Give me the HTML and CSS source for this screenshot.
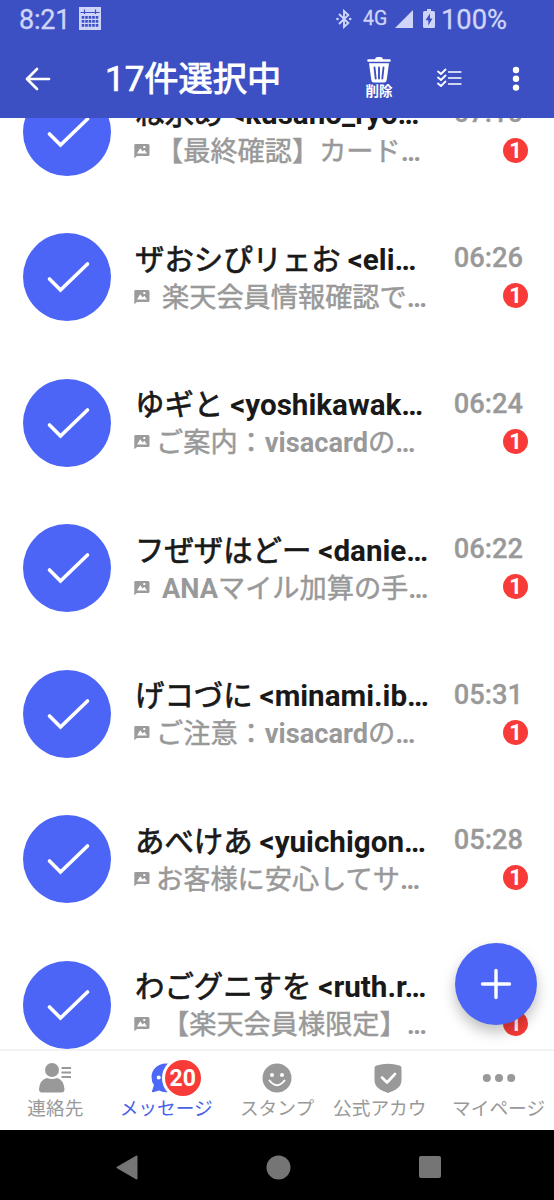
FILE: index.html
```html
<!DOCTYPE html>
<html lang="ja">
<head>
<meta charset="utf-8">
<title>メッセージ</title>
<link rel="stylesheet" href="styles.css">
</head>
<body>
<svg class="defs" width="0" height="0">
  <symbol id="check" viewBox="0 0 88 88"><path d="M26.500 46 37.500 57 64.500 31" fill="none" stroke="#fff" stroke-width="3.600" stroke-linecap="round" stroke-linejoin="miter"/></symbol>
  <symbol id="photo" viewBox="0 0 16 16"><path fill="#9b9b9b" fill-rule="evenodd" d="M1.500 1H14Q15.500 1 15.500 2.500V11.500Q15.500 13 14 13H3L.3 15.300V2.200Q.3 1 1.500 1ZM3 10.500H13L10.400 6.800 8.600 8.600 6.200 5.300ZM9.300 3V5H11.300V3Z"/></symbol>
</svg>
<div class="screen">
  <div class="status">
    <span class="clock">8:21</span>
    <svg class="calendar" width="22" height="23" viewBox="0 0 22 23"><path fill="#ced5f8" d="M0 0H22V23H0Z"/><path d="M1.500 5.500H20.500M5.500 2.500V7M16.500 2.500V7" stroke="#3d50c3" stroke-width="1.200"/><path d="M2.700 10.300H19.500M2.700 14.300H19.500M2.700 18.300H19.500" stroke="#3d50c3" stroke-width="2.800" stroke-dasharray="2.600 .9"/></svg>
    <svg class="bluetooth" width="16" height="20" viewBox="0 0 16 20"><path d="M3 5 12.300 14 8 18V2L12.300 6 3 15" fill="none" stroke="#ced5f8" stroke-width="1.900"/><circle cx="1.500" cy="10" r="1.300" fill="#ced5f8"/><circle cx="14.200" cy="10" r="1.300" fill="#ced5f8"/></svg>
    <span class="network">4G</span>
    <svg class="signal" width="18" height="18" viewBox="0 0 18 18"><path fill="#ced5f8" d="M18 0V18H0Z"/></svg>
    <svg class="battery" width="12" height="19" viewBox="0 0 12 19"><path fill="#ced5f8" d="M4 0H8V2H10.500Q12 2 12 3.500V17.500Q12 19 10.500 19H1.500Q0 19 0 17.500V3.500Q0 2 1.500 2H4Z"/><path fill="#3d50c3" d="M7 4.500 2.500 11.300H5.300V16.500L9.500 9.500H7Z"/></svg>
    <span class="percent">100%</span>
  </div>
  <header class="toolbar">
    <svg class="back" width="26" height="24" viewBox="0 0 26 24"><path d="M24 12H2M12 2 2 12 12 22" fill="none" stroke="#fff" stroke-width="2.700" stroke-linecap="round" stroke-linejoin="round"/></svg>
    <h1 class="title"><span class="count">17</span>件選択中</h1>
    <div class="delete">
      <svg width="24" height="26" viewBox="0 0 24 26"><path fill="#fff" d="M1.500 2.200H8Q8.500 0 10.500 0H13.500Q15.500 0 16 2.200H22.500Q23.800 2.200 23.800 3.500T22.500 4.800H1.500Q.2 4.800.2 3.500T1.500 2.200ZM2 6.300H22L19.700 23Q19.400 25.500 17 25.500H7Q4.600 25.500 4.300 23Z"/><path d="M7.500 10.500 8.700 21.500M12 10.500V21.500M16.500 10.500 15.300 21.500" stroke="#3d50c3" stroke-width="1.900" stroke-linecap="round"/></svg>
      <span>削除</span>
    </div>
    <svg class="select-all" width="25" height="20" viewBox="0 0 25 20"><path d="M11.500 4H24M11.500 10H24M11.500 16H24" stroke="#fff" stroke-width="1.300" stroke-linecap="round"/><path d="M1 3.500 4 6 8.500 1.500M1 9.500 4 12 8.500 7.500M1 15.500 4 18 8.500 13.500" fill="none" stroke="#fff" stroke-width="1.800" stroke-linecap="round" stroke-linejoin="round"/></svg>
    <svg class="more" width="8" height="26" viewBox="0 0 8 26"><g fill="#fff"><circle cx="4" cy="4" r="3.200"/><circle cx="4" cy="12.800" r="3.200"/><circle cx="4" cy="21.600" r="3.200"/></g></svg>
  </header>

  <main class="list">
    <div class="rows">
      <article class="row">
        <svg class="avatar"><use href="#check"/></svg>
        <div class="body">
          <div class="name"><b class="jp">ね氷め</b><b class="latin">&lt;kusano_ryo…</b></div>
          <div class="subject"><svg class="photo"><use href="#photo"/></svg><span>【最終確認】カード</span><i class="dots">…</i></div>
        </div>
        <div class="meta"><time>07:10</time><span class="badge">1</span></div>
      </article>
      <article class="row">
        <svg class="avatar"><use href="#check"/></svg>
        <div class="body">
          <div class="name"><b class="jp">ザおシぴリェお</b><b class="latin">&lt;eli…</b></div>
          <div class="subject spaced"><svg class="photo"><use href="#photo"/></svg><span>楽天会員情報確認で</span><i class="dots">…</i></div>
        </div>
        <div class="meta"><time>06:26</time><span class="badge">1</span></div>
      </article>
      <article class="row">
        <svg class="avatar"><use href="#check"/></svg>
        <div class="body">
          <div class="name"><b class="jp">ゆギと</b><b class="latin">&lt;yoshikawak…</b></div>
          <div class="subject"><svg class="photo"><use href="#photo"/></svg><span>ご案内：</span><b class="word">visacard</b><span>の</span><i class="dots">…</i></div>
        </div>
        <div class="meta"><time>06:24</time><span class="badge">1</span></div>
      </article>
      <article class="row">
        <svg class="avatar"><use href="#check"/></svg>
        <div class="body">
          <div class="name"><b class="jp">フぜザはどー</b><b class="latin">&lt;danie…</b></div>
          <div class="subject spaced"><svg class="photo"><use href="#photo"/></svg><b class="word">ANA</b><span>マイル加算の手</span><i class="dots">…</i></div>
        </div>
        <div class="meta"><time>06:22</time><span class="badge">1</span></div>
      </article>
      <article class="row">
        <svg class="avatar"><use href="#check"/></svg>
        <div class="body">
          <div class="name"><b class="jp">げコづに</b><b class="latin">&lt;minami.ib…</b></div>
          <div class="subject"><svg class="photo"><use href="#photo"/></svg><span>ご注意：</span><b class="word">visacard</b><span>の</span><i class="dots">…</i></div>
        </div>
        <div class="meta"><time>05:31</time><span class="badge">1</span></div>
      </article>
      <article class="row">
        <svg class="avatar"><use href="#check"/></svg>
        <div class="body">
          <div class="name"><b class="jp">あべけあ</b><b class="latin">&lt;yuichigon…</b></div>
          <div class="subject"><svg class="photo"><use href="#photo"/></svg><span>お客様に安心してサ</span><i class="dots">…</i></div>
        </div>
        <div class="meta"><time>05:28</time><span class="badge">1</span></div>
      </article>
      <article class="row">
        <svg class="avatar"><use href="#check"/></svg>
        <div class="body">
          <div class="name"><b class="jp">わごグニすを</b><b class="latin">&lt;ruth.r…</b></div>
          <div class="subject spaced"><svg class="photo"><use href="#photo"/></svg><span>【楽天会員様限定】</span><i class="dots">…</i></div>
        </div>
        <div class="meta"><time></time><span class="badge">1</span></div>
      </article>
    </div>
    <button class="fab" aria-label="新規メッセージ"><svg width="32" height="32" viewBox="0 0 32 32"><path d="M16 2.500V29.500M2.500 16H29.500" stroke="#fff" stroke-width="3.400" stroke-linecap="round"/></svg></button>
  </main>

  <nav class="tabs">
    <div class="tab">
      <svg width="34" height="32" viewBox="0 0 34 32"><g fill="#999"><circle cx="14" cy="8" r="7"/><path d="M1 27Q2 17.500 9 16Q14 18 19 16Q25.500 17.500 26.500 27Q26.500 30.500 23.500 30.500H4Q1 30.500 1 27Z"/></g><path d="M23.500 6H33M23.500 10.500H33M23.500 15H33" stroke="#999" stroke-width="2"/></svg>
      <span>連絡先</span>
    </div>
    <div class="tab active">
      <svg width="34" height="32" viewBox="0 0 34 32"><path fill="#4c68f6" d="M17 1.500C8 1.500 2.500 8 2.500 15Q2.500 20 5 23L3 29Q2.700 30.500 4.200 30.300L10 28.500Q13 30.300 17 30.300C26 30.300 32 23 32 16S26 1.500 17 1.500Z"/><circle cx="9.700" cy="15.500" r="2" fill="#fff"/></svg>
      <em class="count-badge">20</em>
      <span>メッセージ</span>
    </div>
    <div class="tab">
      <svg width="34" height="32" viewBox="0 0 34 32"><circle cx="17" cy="16" r="14.500" fill="#999"/><circle cx="12" cy="13" r="2" fill="#fff"/><circle cx="22" cy="13" r="2" fill="#fff"/><path d="M9.500 18.500Q17 28 24.500 18.500" fill="none" stroke="#fff" stroke-width="2" stroke-linecap="round"/></svg>
      <span>スタンプ</span>
    </div>
    <div class="tab official">
      <svg width="34" height="32" viewBox="0 0 34 32"><path fill="#999" d="M5.500 3.500Q17 .2 28.500 3.500Q30.500 4 30.500 6V18C30.500 25 25 28 17 31C9 28 3.500 25 3.500 18V6Q3.500 4 5.500 3.500Z"/><path d="M11 15.500 16 20.500 24 12" fill="none" stroke="#fff" stroke-width="2.600" stroke-linecap="round" stroke-linejoin="round"/></svg>
      <span>公式アカウ</span>
    </div>
    <div class="tab">
      <svg width="34" height="32" viewBox="0 0 34 32"><g fill="#999"><circle cx="4.800" cy="16" r="4"/><circle cx="17" cy="16" r="4"/><circle cx="29.200" cy="16" r="4"/></g></svg>
      <span>マイページ</span>
    </div>
  </nav>

  <div class="navbar">
    <svg width="22" height="25" viewBox="0 0 22 25"><path fill="#757575" stroke="#757575" stroke-width="2" stroke-linejoin="round" d="M1.500 12.500 20.500 1.500V23.500Z"/></svg>
    <svg width="25" height="25" viewBox="0 0 25 25"><circle cx="12.500" cy="12.500" r="12" fill="#757575"/></svg>
    <svg width="22" height="22" viewBox="0 0 22 22"><rect width="22" height="22" rx="2" fill="#757575"/></svg>
  </div>
</div>
</body>
</html>
```
FILE: styles.css
```css
* { box-sizing: border-box; }
body { margin: 0; background: #fff; font-family: Roboto, "Noto Sans CJK JP", sans-serif; }
svg { display: block; flex: none; }
.defs { position: absolute; }
.screen { width: 554px; height: 1200px; display: flex; flex-direction: column; overflow: hidden; }

.status { height: 40px; flex: none; background: #3d50c3; color: #ced5f8; display: flex; align-items: center; padding-left: 19px; line-height: 40px; font-size: 27px; white-space: nowrap; -webkit-text-stroke: .3px #ced5f8; }
.clock { width: 60px; letter-spacing: -.2px; }
.calendar { margin-top: -3px; }
.bluetooth { margin-left: 235px; margin-top: -3px; }
.network { width: 32px; margin-left: 11px; font-size: 19.500px; margin-top: -2px; }
.signal { margin-top: -3px; }
.battery { margin-left: 10px; margin-top: -3px; }
.percent { margin-left: 6px; font-size: 27.300px; }

.toolbar { height: 78px; flex: none; background: #3d50c3; color: #fff; display: flex; align-items: center; padding-left: 25px; }
.back { margin-top: -1px; }
.title { margin: 0 0 0 54px; width: 260px; font-size: 34.200px; font-weight: 400; line-height: 78px; -webkit-text-stroke: .9px #fff; white-space: nowrap; }
.count { font-size: 35px; -webkit-text-stroke: .7px #fff; }
.delete { display: flex; flex-direction: column; align-items: center; width: 28px; margin-top: -2px; font-size: 13.500px; font-weight: 700; line-height: 16px; }
.delete span { white-space: nowrap; }
.select-all { margin-left: 44px; margin-top: -3px; }
.more { margin-left: 50px; }

.list { height: 931px; flex: none; position: relative; overflow: hidden; background: #fff; }
.rows { margin-top: -59.25px; }
.row { height: 145.5px; display: flex; padding-left: 23px; }
.avatar { width: 88px; height: 88px; margin-top: 28.75px; border-radius: 50%; background: #4c65f6; }
.body { width: 310px; margin-left: 24px; padding-top: 36.500px; white-space: nowrap; }
.name { height: 38px; display: flex; align-items: baseline; color: #191919; line-height: 38px; }
.jp { font-size: 29.400px; font-weight: 400; -webkit-text-stroke: .7px #191919; }
.latin { margin-left: 7px; font-size: 29.600px; font-weight: 700; }
.subject { height: 38px; display: flex; align-items: baseline; color: #999; font-size: 27.200px; line-height: 38px; }
.subject span { -webkit-text-stroke: .5px #999; }
.photo { width: 16px; height: 16px; margin: 0 6px 2px -1px; align-self: center; }
.spaced .photo { margin-right: 12px; }
.word, .dots { font-weight: 700; font-style: normal; }
.meta { width: 78px; display: flex; flex-direction: column; align-items: flex-end; padding-top: 37.750px; color: #999; }
time { height: 32px; font-size: 27.300px; font-weight: 500; line-height: 32px; -webkit-text-stroke: .3px #999; }
.badge { width: 25px; height: 25px; margin-top: 9px; margin-right: -5px; border-radius: 50%; background: #f83b38; color: #fff; font-size: 22px; font-weight: 700; line-height: 25px; text-align: center; }
.fab { position: absolute; left: 455px; top: 825px; width: 82px; height: 82px; padding: 0; display: grid; place-items: center; border: 0; border-radius: 50%; background: #4c65f6; box-shadow: 0 7px 14px rgba(0,0,0,.25); }

.tabs { height: 81px; flex: none; display: grid; grid-template-columns: repeat(5, 110.8px); border-top: 2px solid #f3f3f3; padding-top: 11px; background: #fff; color: #999; }
.tab { position: relative; display: flex; flex-direction: column; align-items: center; font-size: 18.700px; line-height: 31px; white-space: nowrap; }
.official span { margin-right: 16px; }
.active { color: #4a62e8; }
.count-badge { position: absolute; left: 51px; top: -5px; width: 42px; height: 42px; border: 3px solid #fff; border-radius: 50%; background: #f83b38; color: #fff; font-style: normal; font-weight: 700; font-size: 23px; line-height: 37px; text-align: center; }
.navbar { height: 70px; flex: none; background: #000; display: flex; align-items: center; padding: 4px 113px 0 116px; justify-content: space-between; }
```
